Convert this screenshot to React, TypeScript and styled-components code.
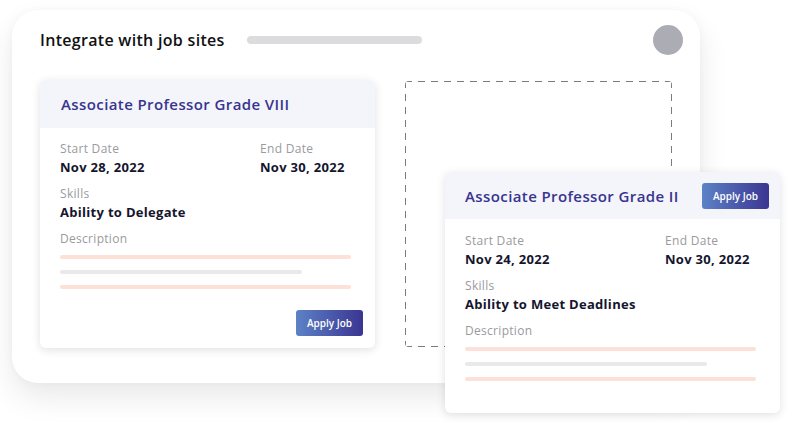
import React, { FC } from 'react'
import styled, { createGlobalStyle } from 'styled-components'

const GlobalStyle = createGlobalStyle`
  html, body {
    margin: 0;
    padding: 0;
    background: #ffffff;
  }
  body {
    font-family: 'Open Sans', 'Noto Sans', Arial, sans-serif;
    -webkit-font-smoothing: antialiased;
  }
`

type Job = {
  title: string
  start: string
  end: string
  skill: string
}

const jobs: Job[] = [
  { title: 'Associate Professor Grade VIII', start: 'Nov 28, 2022', end: 'Nov 30, 2022', skill: 'Ability to Delegate' },
  { title: 'Associate Professor Grade II', start: 'Nov 24, 2022', end: 'Nov 30, 2022', skill: 'Ability to Meet Deadlines' },
]

const Stage = styled.div`
  position: relative;
  width: 792px;
  height: 424px;
  padding: 10px 0 0 12px;
  box-sizing: border-box;
  overflow: hidden;
`

const Panel = styled.div`
  width: 688px;
  height: 373px;
  box-sizing: border-box;
  padding: 15px 17px 0 28px;
  background: #ffffff;
  border-radius: 26px;
  box-shadow: 0 14px 30px rgba(0, 0, 0, 0.09), 0 0 10px rgba(0, 0, 0, 0.03);
`

const PanelHeader = styled.div`
  display: flex;
  align-items: center;
  height: 30px;
`

const PanelTitle = styled.h2`
  margin: 0;
  font-size: 16px;
  font-weight: 600;
  color: #111111;
  letter-spacing: 0.3px;
`

const Placeholder = styled.div`
  margin-left: 22px;
  width: 175px;
  height: 8px;
  border-radius: 4px;
  background: #dcdcdf;
`

const Avatar = styled.div`
  margin-left: auto;
  width: 30px;
  height: 30px;
  border-radius: 50%;
  background: #acacb4;
`

const Board = styled.div`
  display: flex;
  align-items: flex-start;
  gap: 30px;
  margin-top: 25px;
`

const dash = '#7a7a80'

const DropZone = styled.div`
  width: 267px;
  height: 266px;
  margin-top: 1px;
  border-radius: 4px;
  background-image:
    repeating-linear-gradient(90deg, ${dash} 0 7px, transparent 7px 13px),
    repeating-linear-gradient(90deg, ${dash} 0 7px, transparent 7px 13px),
    repeating-linear-gradient(180deg, ${dash} 0 7px, transparent 7px 13px),
    repeating-linear-gradient(180deg, ${dash} 0 7px, transparent 7px 13px);
  background-size: 100% 1px, 100% 1px, 1px 100%, 1px 100%;
  background-position: 0 0, 0 100%, 0 0, 100% 0;
  background-repeat: no-repeat;
`

const Overlay = styled.div`
  position: absolute;
  left: 445px;
  top: 172px;
`

const Card = styled.div<{ $floating?: boolean }>`
  width: 335px;
  height: ${(p) => (p.$floating ? '241px' : '268px')};
  box-sizing: border-box;
  background: #ffffff;
  border-radius: 6px;
  box-shadow: 0 2px 8px rgba(20, 20, 60, 0.13);
  overflow: hidden;
  display: flex;
  flex-direction: column;
`

const CardHeader = styled.div<{ $floating?: boolean }>`
  display: flex;
  align-items: center;
  justify-content: space-between;
  height: ${(p) => (p.$floating ? '47px' : '48px')};
  padding: 0 11px 0 ${(p) => (p.$floating ? '20px' : '21px')};
  background: #f4f5fa;
`

const CardTitle = styled.h3`
  margin: 0;
  font-size: 15px;
  font-weight: 600;
  letter-spacing: 0.4px;
  color: #38348f;
`

const CardBody = styled.div<{ $floating?: boolean }>`
  flex: 1;
  display: flex;
  flex-direction: column;
  padding: ${(p) => (p.$floating ? '13px' : '12px')} 24px 12px 20px;
`

const DateRow = styled.div`
  display: grid;
  grid-template-columns: 200px 1fr;
`

const Field = styled.div`
  display: flex;
  flex-direction: column;
  margin-bottom: 9px;
`

const Label = styled.span`
  font-size: 12px;
  line-height: 18px;
  color: #9a9a9e;
  letter-spacing: 0.3px;
`

const Value = styled.span`
  font-size: 13px;
  line-height: 18px;
  font-weight: 700;
  color: #15152e;
  letter-spacing: 0.3px;
`

const Lines = styled.div`
  display: flex;
  flex-direction: column;
  gap: 11px;
  margin-top: 7px;
`

const Line = styled.div<{ $tone: 'pink' | 'grey'; $short?: boolean }>`
  height: 4px;
  border-radius: 2px;
  width: ${(p) => (p.$short ? '242px' : '291px')};
  background: ${(p) => (p.$tone === 'pink' ? '#fde1d8' : '#e9e9ec')};
`

const Footer = styled.div`
  margin-top: auto;
  display: flex;
  justify-content: flex-end;
  margin-right: -12px;
`

const ApplyButton = styled.button`
  width: 67px;
  height: 26px;
  border: none;
  border-radius: 3px;
  padding: 0;
  background: linear-gradient(90deg, #5d82c6 0%, #3a3592 100%);
  color: #ffffff;
  font-family: inherit;
  font-size: 10px;
  font-weight: 600;
  cursor: pointer;
`

const JobCard: FC<{ job: Job; floating?: boolean }> = ({ job, floating }) => (
  <Card $floating={floating}>
    <CardHeader $floating={floating}>
      <CardTitle>{job.title}</CardTitle>
      {floating && <ApplyButton>Apply Job</ApplyButton>}
    </CardHeader>
    <CardBody $floating={floating}>
      <DateRow>
        <Field>
          <Label>Start Date</Label>
          <Value>{job.start}</Value>
        </Field>
        <Field>
          <Label>End Date</Label>
          <Value>{job.end}</Value>
        </Field>
      </DateRow>
      <Field>
        <Label>Skills</Label>
        <Value>{job.skill}</Value>
      </Field>
      <Label>Description</Label>
      <Lines>
        <Line $tone="pink" />
        <Line $tone="grey" $short />
        <Line $tone="pink" />
      </Lines>
      {!floating && (
        <Footer>
          <ApplyButton>Apply Job</ApplyButton>
        </Footer>
      )}
    </CardBody>
  </Card>
)

const App: FC = () => {
  return (
    <>
      <GlobalStyle />
      <Stage>
        <Panel>
          <PanelHeader>
            <PanelTitle>Integrate with job sites</PanelTitle>
            <Placeholder />
            <Avatar />
          </PanelHeader>
          <Board>
            <JobCard job={jobs[0]} />
            <DropZone />
          </Board>
        </Panel>
        <Overlay>
          <JobCard job={jobs[1]} floating />
        </Overlay>
      </Stage>
    </>
  )
}

export default App
